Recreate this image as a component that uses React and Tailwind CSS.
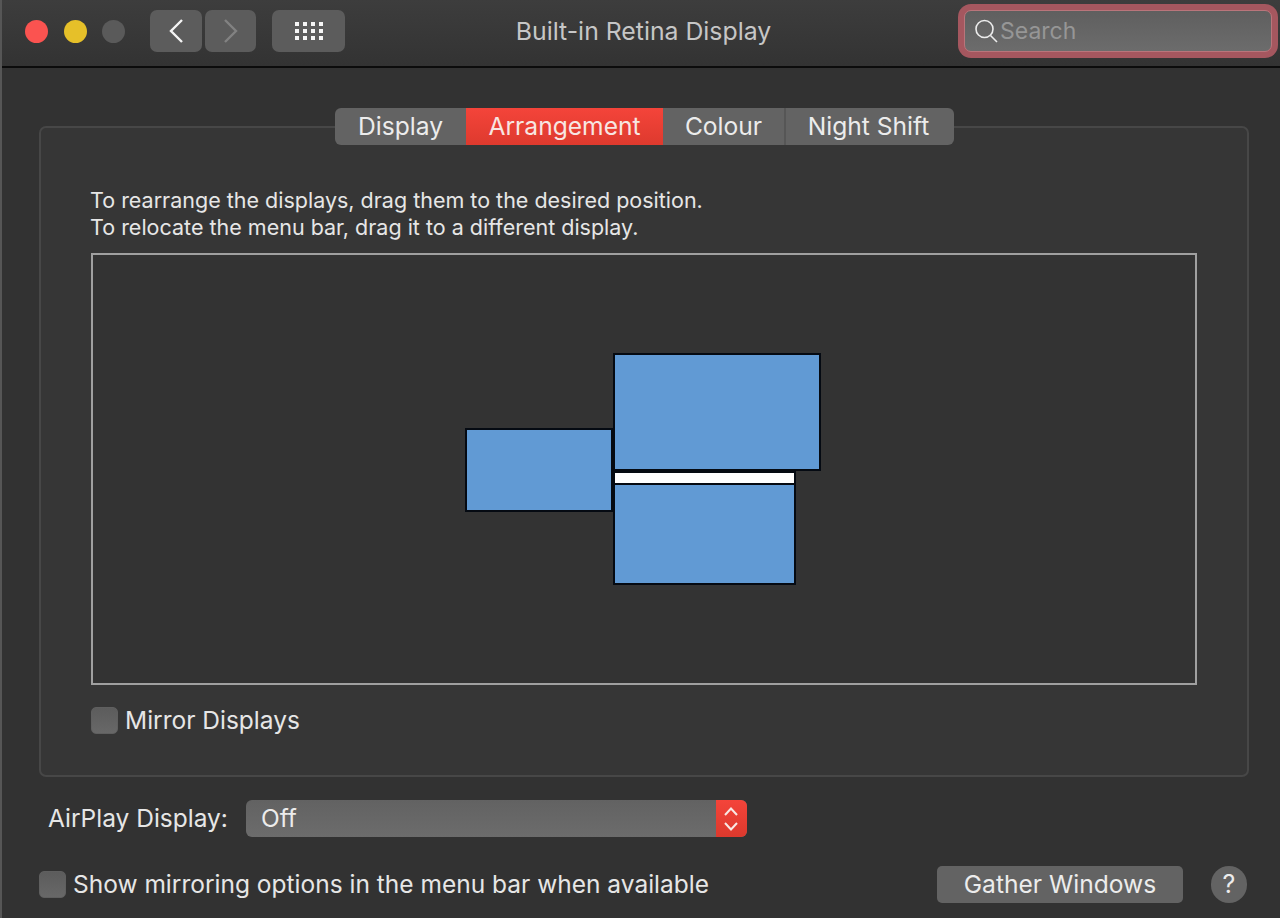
import React from 'react';

const font = { fontFamily: 'Inter, "Noto Sans", sans-serif' };

function Checkbox({ label }) {
  return (
    <label className="flex items-center gap-[7px]">
      <span className="block w-[27px] h-[27px] rounded-[5px] bg-gradient-to-b from-[#5c5c5c] to-[#686868] border border-[#5f5f5f]" />
      <span className="text-[24.5px] text-[#e6e6e6]">{label}</span>
    </label>
  );
}

function Tab({ label, active, className }) {
  return (
    <div
      className={`h-full flex items-center justify-center text-[24.6px] ${className} ${
        active
          ? 'bg-gradient-to-b from-[#f4443a] to-[#de3a2e] text-[#f7e6e2]'
          : 'text-[#ececec]'
      }`}
    >
      {label}
    </div>
  );
}

function Display({ className, children }) {
  return (
    <div className={`absolute bg-[#619ad4] border-2 border-[#050a12] ${className}`}>
      {children}
    </div>
  );
}

export default function App() {
  return (
    <div
      style={font}
      className="w-[1280px] h-[918px] overflow-hidden flex flex-col bg-[#323232] border-l-2 border-[#565656] antialiased"
    >
      {/* title bar */}
      <div className="relative h-[68px] shrink-0 flex items-center bg-gradient-to-b from-[#3d3d3d] to-[#333333] border-b-2 border-[#0c0c0c] pb-[4px]">
        <div className="flex items-center gap-[15.5px] ml-[23px]">
          <span className="block w-[23px] h-[23px] rounded-full bg-[#fb5350]" />
          <span className="block w-[23px] h-[23px] rounded-full bg-[#e6c029]" />
          <span className="block w-[23px] h-[23px] rounded-full bg-[#5a5a5a]" />
        </div>
        <div className="flex gap-[3px] ml-[25px]">
          <button className="w-[52px] h-[42px] rounded-[7px] bg-[#5c5c5c] flex items-center justify-center">
            <svg width="16" height="26" viewBox="0 0 16 26" fill="none">
              <path d="M14 2 L3 13 L14 24" stroke="#f4f4f4" strokeWidth="2.4" />
            </svg>
          </button>
          <button className="w-[51px] h-[42px] rounded-[7px] bg-[#5c5c5c] flex items-center justify-center">
            <svg width="16" height="26" viewBox="0 0 16 26" fill="none">
              <path d="M2 2 L13 13 L2 24" stroke="#828282" strokeWidth="2.4" />
            </svg>
          </button>
        </div>
        <button className="ml-[16px] w-[73px] h-[42px] rounded-[7px] bg-[#5c5c5c] flex items-center justify-center">
          <div className="grid grid-cols-4 gap-x-[4px] gap-y-[3px]">
            {Array.from({ length: 12 }).map((_, i) => (
              <span key={i} className="block w-[4px] h-[4px] bg-[#f6f6f6]" />
            ))}
          </div>
        </button>
        <div className="flex-1 flex justify-center pr-[16px] pt-[2px] text-[24.8px] text-[#c6c6c6]">
          Built-in Retina Display
        </div>
        <div className="mr-[2px] w-[320px] h-[54px] rounded-[13px] bg-[#a5575f] p-[6px]">
          <div className="w-full h-full rounded-[7px] border border-[#b9757b] bg-gradient-to-b from-[#5f5f5f] to-[#6c6c6c] flex items-center pl-[8px] gap-[1px]">
            <svg width="26" height="26" viewBox="0 0 26 26" fill="none">
              <circle cx="11.5" cy="11" r="8.5" stroke="#ececec" strokeWidth="1.6" />
              <path d="M17.5 17.5 L24 24" stroke="#ececec" strokeWidth="1.6" />
            </svg>
            <span className="text-[23px] text-[#969696]">Search</span>
          </div>
        </div>
      </div>

      {/* tab box */}
      <div className="ml-[37px] mr-[31px] mt-[58px] h-[651px] shrink-0 rounded-[7px] bg-[#363636] border-2 border-[#474747] flex flex-col">
        <div className="self-center -mt-[20px] ml-[1px] h-[37px] w-[619px] rounded-[6px] bg-[#636363] flex overflow-hidden">
          <Tab label="Display" className="w-[131px]" />
          <Tab label="Arrangement" active className="w-[197px]" />
          <Tab label="Colour" className="w-[123px] border-r-2 border-[#565656]" />
          <Tab label="Night Shift" className="flex-1 pr-[3px]" />
        </div>

        <div className="ml-[49px] mr-[50px] mt-[42px] text-[21.5px] leading-[27px] text-[#e6e6e6]">
          <p>To rearrange the displays, drag them to the desired position.</p>
          <p>To relocate the menu bar, drag it to a different display.</p>
        </div>

        <div className="relative mx-[50px] mt-[12px] h-[432px] border-2 border-[#a0a0a0] bg-[#333333]">
          <Display className="left-[520px] top-[98px] w-[208px] h-[118px]" />
          <Display className="left-[372px] top-[173px] w-[148px] h-[84px]" />
          <Display className="left-[520px] top-[216px] w-[183px] h-[114px]">
            <div className="h-[10px] bg-white border-b-2 border-[#050a12] box-content" />
          </Display>
        </div>

        <div className="mx-[50px] mt-[17px]">
          <Checkbox label="Mirror Displays" />
        </div>
      </div>

      {/* bottom controls */}
      <div className="flex items-center ml-[46px] mt-[23px]">
        <span className="text-[24.5px] text-[#e6e6e6]">AirPlay Display:</span>
        <div className="ml-[18px] w-[501px] h-[37px] rounded-[6px] bg-gradient-to-b from-[#626262] to-[#6c6c6c] flex items-center justify-between overflow-hidden">
          <span className="ml-[15px] text-[24.5px] text-[#ececec]">Off</span>
          <div className="w-[31px] h-full bg-gradient-to-b from-[#f4443a] to-[#dc392d] flex items-center justify-center">
            <svg width="16" height="28" viewBox="0 0 16 28" fill="none">
              <path d="M2 10 L8 3.5 L14 10 M2 18 L8 24.5 L14 18" stroke="#f8e8e4" strokeWidth="2" />
            </svg>
          </div>
        </div>
      </div>

      <div className="flex items-center ml-[37px] mt-[29px]">
        <Checkbox label="Show mirroring options in the menu bar when available" />
        <button className="ml-auto w-[246px] h-[37px] rounded-[5px] bg-[#636363] text-[24.6px] text-[#ececec] flex items-center justify-center">
          Gather Windows
        </button>
        <button className="ml-[28px] mr-[33px] w-[36px] h-[37px] rounded-full bg-[#636363] text-[25px] text-[#ececec] flex items-center justify-center">
          ?
        </button>
      </div>
    </div>
  );
}
